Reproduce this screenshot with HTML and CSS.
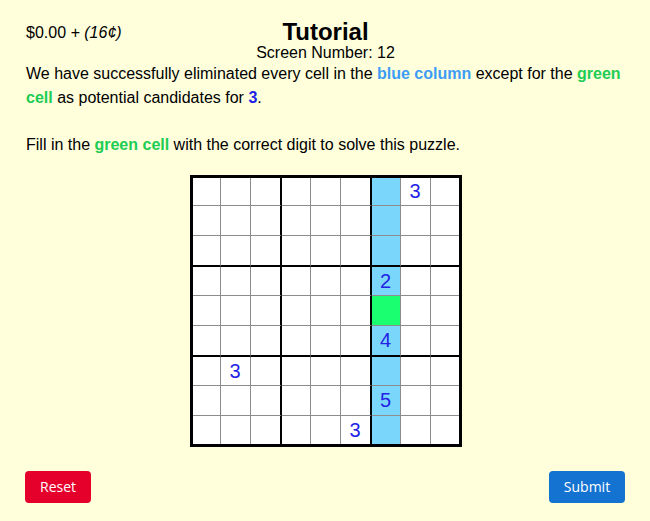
FILE: index.html
```html
<!DOCTYPE html>
<html>
<head>
<meta charset="utf-8">
<link rel="stylesheet" href="styles.css">
</head>
<body>
<div class="page">
  <header class="header">
    <div class="money">$0.00 <em>+ (16¢)</em></div>
    <div class="titles">
      <h1 class="title">Tutorial</h1>
      <div class="screen">Screen Number: 12</div>
    </div>
    <div></div>
  </header>
  <p class="text">We have successfully eliminated every cell in the <b class="blue">blue column</b> except for the <b class="green">green cell</b> as potential candidates for <b class="three">3</b>.<br><br>Fill in the <b class="green">green cell</b> with the correct digit to solve this puzzle.</p>
  <div class="board">
    <div class="cell"></div><div class="cell"></div><div class="cell"></div><div class="cell"></div><div class="cell"></div><div class="cell"></div><div class="cell hl"></div><div class="cell">3</div><div class="cell"></div>
    <div class="cell"></div><div class="cell"></div><div class="cell"></div><div class="cell"></div><div class="cell"></div><div class="cell"></div><div class="cell hl"></div><div class="cell"></div><div class="cell"></div>
    <div class="cell"></div><div class="cell"></div><div class="cell"></div><div class="cell"></div><div class="cell"></div><div class="cell"></div><div class="cell hl"></div><div class="cell"></div><div class="cell"></div>
    <div class="cell"></div><div class="cell"></div><div class="cell"></div><div class="cell"></div><div class="cell"></div><div class="cell"></div><div class="cell hl">2</div><div class="cell"></div><div class="cell"></div>
    <div class="cell"></div><div class="cell"></div><div class="cell"></div><div class="cell"></div><div class="cell"></div><div class="cell"></div><div class="cell target"></div><div class="cell"></div><div class="cell"></div>
    <div class="cell"></div><div class="cell"></div><div class="cell"></div><div class="cell"></div><div class="cell"></div><div class="cell"></div><div class="cell hl">4</div><div class="cell"></div><div class="cell"></div>
    <div class="cell"></div><div class="cell">3</div><div class="cell"></div><div class="cell"></div><div class="cell"></div><div class="cell"></div><div class="cell hl"></div><div class="cell"></div><div class="cell"></div>
    <div class="cell"></div><div class="cell"></div><div class="cell"></div><div class="cell"></div><div class="cell"></div><div class="cell"></div><div class="cell hl">5</div><div class="cell"></div><div class="cell"></div>
    <div class="cell"></div><div class="cell"></div><div class="cell"></div><div class="cell"></div><div class="cell"></div><div class="cell">3</div><div class="cell hl"></div><div class="cell"></div><div class="cell"></div>
  </div>
  <div class="actions">
    <button class="btn reset">Reset</button>
    <button class="btn submit">Submit</button>
  </div>
</div>
</body>
</html>
```

FILE: styles.css
```css
html, body {
  margin: 0;
  padding: 0;
  background: #ffffdc;
}
body {
  font-family: "Liberation Sans", Arial, Helvetica, sans-serif;
  color: #000;
}
.page {
  width: 599px;
  padding: 20px 25px 0 26px;
}
.header {
  display: grid;
  grid-template-columns: 1fr auto 1fr;
  align-items: start;
}
.money {
  font-size: 16px;
  line-height: 24px;
  padding-top: 1px;
}
.money em {
  font-style: italic;
}
.titles {
  text-align: center;
}
.title {
  margin: 0;
  font-size: 24px;
  line-height: 24px;
  font-weight: bold;
}
.screen {
  font-size: 16px;
  line-height: 17px;
}
.text {
  margin: 1px 0 0 0;
  font-size: 16px;
  line-height: 23.5px;
}
.text b {
  font-weight: bold;
}
.blue {
  color: #3d9cf5;
}
.green {
  color: #20cc52;
}
.three {
  color: #2222e6;
}
.board {
  display: grid;
  grid-template-columns: 28px 30px 31px 29px 30px 31px 29px 30px 28px;
  grid-template-rows: 28px 30px 31px 29px 30px 31px 29px 30px 28px;
  width: max-content;
  border: 3px solid #000;
  background: #fff;
  margin: 19px auto 0 auto;
}
.cell {
  box-sizing: border-box;
  border-right: 1px solid #8c8c8c;
  border-bottom: 1px solid #8c8c8c;
  display: flex;
  align-items: center;
  justify-content: center;
  font-size: 20px;
  color: #2222e6;
  background: #fff;
}
.cell:nth-child(9n+3),
.cell:nth-child(9n+6) {
  border-right: 2px solid #000;
}
.cell:nth-child(9n) {
  border-right: none;
}
.cell:nth-child(n+19):nth-child(-n+27),
.cell:nth-child(n+46):nth-child(-n+54) {
  border-bottom: 2px solid #000;
}
.cell:nth-child(n+73) {
  border-bottom: none;
}
.cell.hl {
  background: #7bd6fb;
}
.cell.target {
  background: #1aff6f;
}
.actions {
  display: flex;
  justify-content: space-between;
  margin-top: 24px;
  margin-left: -1px;
}
.btn {
  font-family: "Open Sans", "Noto Sans", sans-serif;
  font-size: 14px;
  color: #fff;
  border: none;
  border-radius: 4px;
  height: 32px;
  padding: 0 14px;
  line-height: 32px;
}
.reset {
  background: #e4002b;
  width: 66px;
}
.submit {
  background: #1473d1;
  width: 76px;
}
```
